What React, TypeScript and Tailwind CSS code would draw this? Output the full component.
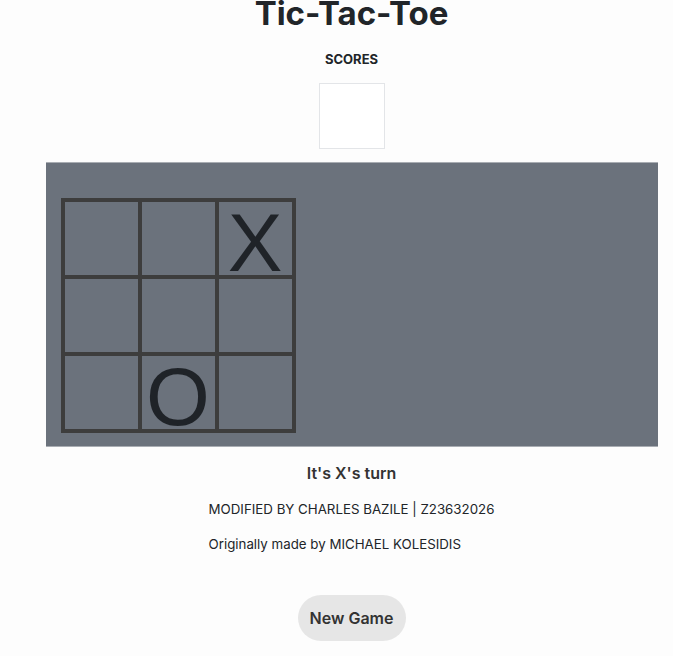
import React from 'react';

const cells: string[] = ['', '', 'X', '', '', '', '', 'O', ''];

export default function App() {
  return (
    <div className="min-h-[656px] bg-[#fdfdfd] pl-[30px] font-['Inter','Liberation_Sans',sans-serif] text-[#212529] flex flex-col items-center overflow-hidden">
      <h1 className="text-[33px] leading-[30px] font-bold -mt-[2px]">Tic-Tac-Toe</h1>
      <div className="mt-[23px] text-[13px] font-bold leading-4">SCORES</div>
      <div className="mt-[16px] w-[66px] h-[66px] border border-[#e3e5e8] bg-white"></div>

      <div className="mt-[13px] w-[612px] h-[285px] shrink-0 bg-[#6b727c] border-y border-[#a9adb3] pt-[35px] pl-[15px]">
        <div className="grid grid-cols-3 gap-[4px] bg-[#3d3d3d] p-[4px] w-[235px]">
          {cells.map((c, i) => (
            <div
              key={i}
              className="h-[73px] bg-[#6b727c] flex items-end justify-center overflow-visible text-[#1f2328] text-[82px] leading-[64px] font-normal font-['Liberation_Sans',sans-serif]"
            >
              {c}
            </div>
          ))}
        </div>
      </div>

      <div className="mt-[16px] text-[16px] font-semibold text-[#333] leading-5">It's X's turn</div>
      <div className="mt-[18px] text-[13.3px] text-[#212529] leading-4 flex flex-col gap-[19px]">
        <div>MODIFIED BY CHARLES BAZILE | Z23632026</div>
        <div>Originally made by MICHAEL KOLESIDIS</div>
      </div>
      <button className="mt-[43px] w-[108px] h-[46px] rounded-full bg-[#e6e6e6] text-[16px] font-semibold text-[#333]">
        New Game
      </button>
    </div>
  );
}
